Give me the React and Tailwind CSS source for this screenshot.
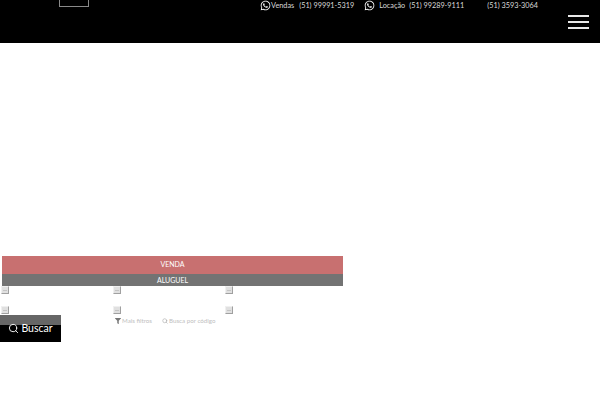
import { Search } from "lucide-react";
import { FaWhatsapp, FaFilter } from "react-icons/fa";

const Tick = () => (
  <span className="block w-[8px] h-[8px] bg-[#e0e0e0] border border-[#f0f0f0] border-b-[#a0a0a0] border-r-[#a0a0a0]">
    <span className="block mx-[1px] mt-[3px] h-[1px] bg-[#c4c4c4]" />
  </span>
);

const Phone = ({ children, className }) => (
  <span className={"text-[7.3px] text-[#d8d8d8] whitespace-nowrap " + className}>{children}</span>
);

const App = () => {
  return (
    <div className="w-[600px] h-[400px] bg-white overflow-hidden font-['Lato',sans-serif]">
      <header className="h-[43px] bg-black flex items-start">
        <div className="ml-[59px] w-[30px] h-[7px] shrink-0 border border-t-0 border-[#8a8a8a]" />
        <div className="ml-[171px] flex items-center h-[11px] text-[#e0e0e0]">
          <FaWhatsapp size={11} className="text-white shrink-0" />
          <Phone className="mt-[1px]">Vendas</Phone>
          <Phone className="ml-[5px] mt-[1px]">(51) 99991-5319</Phone>
          <FaWhatsapp size={11} className="ml-[10px] text-white shrink-0" />
          <Phone className="ml-[4px] mt-[1px]">Locação</Phone>
          <Phone className="ml-[4px] mt-[1px]">(51) 99289-9111</Phone>
          <Phone className="ml-[23px] mt-[1px]">(51) 3593-3064</Phone>
        </div>
        <div className="ml-auto mr-[11px] mt-[15px] w-[21px] shrink-0 flex flex-col gap-[4.5px]">
          <span className="h-[1.5px] bg-[#e8e8e8]" />
          <span className="h-[1.5px] bg-[#e8e8e8]" />
          <span className="h-[1.5px] bg-[#e8e8e8]" />
        </div>
      </header>

      <main className="pt-[213px]">
        <div className="ml-[2px] w-[341px] text-[7px] text-white text-center">
          <div className="h-[18px] leading-[17px] bg-[#c87070]">VENDA</div>
          <div className="h-[12px] leading-[12px] bg-[#737373]">ALUGUEL</div>
        </div>
        <div className="ml-[1px] w-[232px] grid grid-cols-[112px_112px_8px]">
          <Tick />
          <Tick />
          <Tick />
        </div>
        <div className="mt-[12px] ml-[1px] w-[232px] grid grid-cols-[112px_112px_8px]">
          <Tick />
          <Tick />
          <Tick />
        </div>
        <div className="flex items-start mt-[1px]">
          <button className="w-[61px] h-[27px] shrink-0 bg-[linear-gradient(#666_37%,#000_37%)] text-white text-[10.5px] flex items-center justify-center gap-[2px]">
            <Search size={11} />
            Buscar
          </button>
          <div className="ml-[54px] mt-[1px] flex items-center text-[6.2px] text-[#c0c0c0]">
            <FaFilter size={6} className="text-[#777] shrink-0" />
            <span className="ml-[1px]">Mais filtros</span>
            <Search size={6} className="ml-[10px] text-[#999] shrink-0" />
            <span className="ml-[1px]">Busca por código</span>
          </div>
        </div>
      </main>
    </div>
  );
};

export default App;
